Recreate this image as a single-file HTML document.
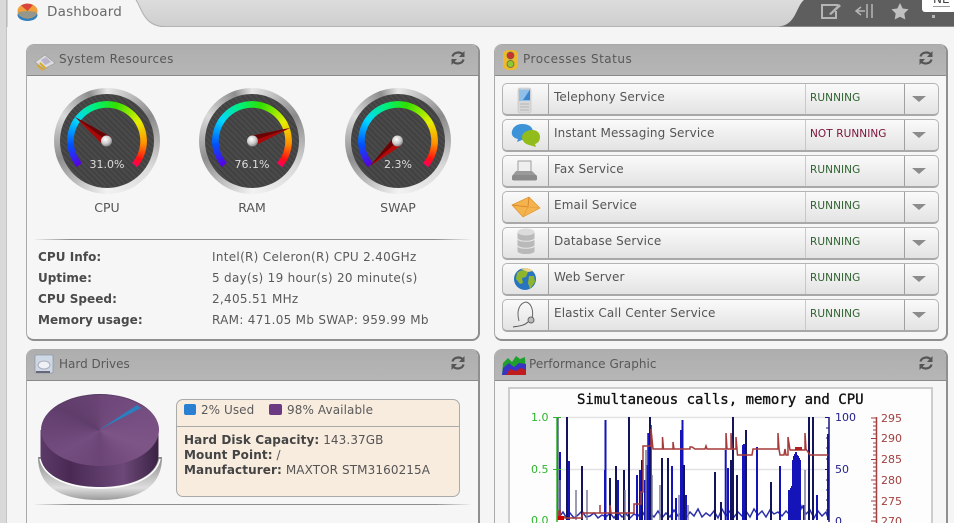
<!DOCTYPE html>
<html><head><meta charset="utf-8"><style>
html,body{margin:0;padding:0;width:954px;height:523px;overflow:hidden}
#w{position:absolute;left:0;top:0;width:954px;height:523px;overflow:hidden;background:#f5f5f5;font-family:"DejaVu Sans","Liberation Sans",sans-serif;font-size:12px;color:#555;filter:blur(.35px)}
div,span,svg{position:absolute;box-sizing:border-box;white-space:nowrap}
b,i{position:static}
.panel{background:#f6f6f6;border:1px solid #aaa;border-right:2px solid #8f8f8f;border-bottom:2px solid #8f8f8f;border-radius:8px;overflow:hidden}
.head{left:0;right:0;top:0;height:31px;background:linear-gradient(#aeaeae,#b6b6b6);border-bottom:1px solid #8a8a8a}
.t{font-size:12px;color:#585858;line-height:16px}
.row{left:502px;width:437px;height:33px;border:1px solid #b4b4b4;border-bottom:2px solid #a8a8a8;border-radius:5px;background:linear-gradient(#fafafa,#e3e3e3);overflow:hidden}
.c1{left:45px;top:0;bottom:0;width:1px;background:#a0a0a0}
.c2{left:302px;top:0;bottom:0;width:1px;background:#c8c8c8}
.c3{left:401px;top:0;bottom:0;width:1px;background:#a0a0a0}
.name{left:51px;top:5px;line-height:16px;color:#555;letter-spacing:.12px}
.st{left:307px;top:6px;font-size:10.500px;line-height:16px;color:#2f622f;letter-spacing:.08px}
.st.n{color:#7a1238}
.tri{left:409px;top:12px;width:0;height:0;border-left:7px solid transparent;border-right:7px solid transparent;border-top:6px solid #8c8c8c}
.lb{font-weight:bold;color:#4a4a4a;left:38px;line-height:16px;font-size:12px;letter-spacing:.05px}
.vl{left:212px;line-height:16px;color:#5a5a5a;font-size:12px;letter-spacing:.3px}
.gl{width:106px;text-align:center;font-size:12.500px;color:#555;line-height:14px;top:201px}
.gv{width:106px;text-align:center;font-size:11px;color:#ddd;line-height:14px;top:158px}
.rg{top:88px;width:106px;height:106px;border-radius:50%;background:conic-gradient(#e8e8e8,#8a8a8a 60deg,#d9d9d9 120deg,#f2f2f2 180deg,#8f8f8f 250deg,#dadada 300deg,#8e8e8e 340deg,#e8e8e8)}
.dk{top:94px;width:94px;height:94px;border-radius:50%;background:repeating-linear-gradient(45deg,#4a4a4a 0 2px,#414141 2px 4px)}
.ar{top:101px;width:80px;height:80px;border-radius:50%;background:conic-gradient(from 229deg,#5a00e0 0deg,#0050ff 35deg,#00d8ff 75deg,#00f070 115deg,#30e000 145deg,#e6f000 190deg,#ff9000 225deg,#ff1010 250deg,#ff0060 262deg,transparent 262deg);-webkit-mask:radial-gradient(circle,transparent 33px,#000 33.500px)}
</style></head><body><div id="w">

<!-- top bar -->
<div style="left:0;top:0;width:954px;height:27px;background:linear-gradient(#dcdcdc,#cfcfcf);border-bottom:1px solid #b5b5b5"></div>
<div style="left:0;top:0;width:7px;height:523px;background:#d9d9d9;border-right:1px solid #c4c4c4"></div>
<svg style="left:0;top:0" width="954" height="28">
<path d="M7 27V0H136C141 6 143 27 164 27Z" fill="#f5f5f5"/>
<path d="M7 27V0M136 0C141 6 143 26 164 26.500" fill="none" stroke="#b0b0b0"/>
<path d="M954 0H804C796 6 796 26 778 26.500H954Z" fill="#5e5e5e"/>
<!-- logo -->
<ellipse cx="27.500" cy="15" rx="10" ry="6" fill="#2f7fc1"/>
<ellipse cx="27.500" cy="11" rx="10" ry="7.500" fill="#f0a03a"/>
<path d="M27.500 11L21 5.500Q27 2 33 5Z" fill="#d9453a"/>
<path d="M27.500 11L37 12Q35 18 27 18Q20 18 18 12Z" fill="#4a90d0" opacity=".55"/>
<!-- top-right icons -->
<path d="M838 5H822V18H836V11" fill="none" stroke="#b5b5b5" stroke-width="2"/>
<path d="M829 14L839 4L841 6L831 15Z" fill="#b5b5b5"/>
<path d="M867 4V18M872 4V18" stroke="#b5b5b5" stroke-width="1.500"/>
<path d="M856 11H865M861 7L856 11L861 15" fill="none" stroke="#b5b5b5" stroke-width="1.500"/>
<path d="M900 3L902.700 8.500L908.500 9.300L904.300 13.500L905.300 19.500L900 16.700L894.700 19.500L895.700 13.500L891.500 9.300L897.300 8.500Z" fill="#c0c0c0"/>
<rect x="932" y="15" width="3" height="3" fill="#b5b5b5"/>
</svg>
<div style="left:47px;top:3px;font-size:13.500px;line-height:18px;color:#6a6a6a;letter-spacing:.2px">Dashboard</div>
<div style="left:922px;top:-4px;width:40px;height:16px;background:#fff;border-radius:3px;overflow:hidden"><span style="left:11px;top:-4px;font-size:12px;line-height:14px;color:#444;border-bottom:1px solid #999">NE</span></div>

<!-- System Resources -->
<div class="panel" style="left:26px;top:44px;width:454px;height:297px"><div class="head"></div></div>
<div class="t" style="left:59px;top:51px;letter-spacing:.3px">System Resources</div>
<svg style="left:33px;top:51px" width="24" height="20"><path d="M2 11L12 4L22 12L11 18Z" fill="#ddd" stroke="#999" stroke-width=".6"/><path d="M8 9L13 6L18 11L12 14Z" fill="#b9b4c9"/><path d="M4 14L10 19M7 12L13 18" stroke="#d9a92e" stroke-width="2"/></svg>
<svg style="left:449px;top:49px" width="18" height="18" viewBox="0 0 18 18"><path d="M3.500 7.500C4.500 3.500 10.500 2 14 5.500M14.500 10.500C13.500 14.500 7.500 16 4 12.500" fill="none" stroke="#555" stroke-width="2.200"/><path d="M15.500 2V8H10ZM2.500 16V10H8Z" fill="#555"/></svg>

<!-- gauges -->
<div class="rg" style="left:54px"></div><div class="dk" style="left:60px"></div><div class="ar" style="left:67px"></div>
<div class="rg" style="left:199px"></div><div class="dk" style="left:205px"></div><div class="ar" style="left:212px"></div>
<div class="rg" style="left:345px"></div><div class="dk" style="left:351px"></div><div class="ar" style="left:358px"></div>

<svg style="left:0;top:0" width="480" height="200">
<defs><radialGradient id="k" cx=".4" cy=".35" r=".7"><stop offset="0" stop-color="#fff"/><stop offset=".6" stop-color="#c8c8c8"/><stop offset="1" stop-color="#777"/></radialGradient></defs>
<path d="M75 117L111 137L103 145Z" fill="#a80808"/><path d="M75 117L111 137L107 141Z" fill="#6a0404"/>
<path d="M290 128L250 136L254 146Z" fill="#a80808"/><path d="M290 128L250 136L252 141Z" fill="#6a0404"/>
<path d="M370 166L394 137L402 145Z" fill="#b80808"/><path d="M370 166L394 137L398 141Z" fill="#6a0404"/>
<circle cx="106.500" cy="141" r="5.500" fill="url(#k)"/>
<circle cx="252.500" cy="141" r="5.500" fill="url(#k)"/>
<circle cx="397.500" cy="141" r="5.500" fill="url(#k)"/>
</svg>
<div class="gv" style="left:54px">31.0%</div>
<div class="gv" style="left:199px">76.1%</div>
<div class="gv" style="left:345px">2.3%</div>
<div class="gl" style="left:54px">CPU</div>
<div class="gl" style="left:199px">RAM</div>
<div class="gl" style="left:345px">SWAP</div>

<div style="left:35px;top:239px;width:435px;height:1px;background:linear-gradient(90deg,#eee,#8f8f8f 8%,#8f8f8f 92%,#eee)"></div>
<div class="lb" style="top:249px">CPU Info:</div><div class="vl" style="top:249px">Intel(R) Celeron(R) CPU 2.40GHz</div>
<div class="lb" style="top:270px">Uptime:</div><div class="vl" style="top:270px">5 day(s) 19 hour(s) 20 minute(s)</div>
<div class="lb" style="top:291px">CPU Speed:</div><div class="vl" style="top:291px">2,405.51 MHz</div>
<div class="lb" style="top:312px">Memory usage:</div><div class="vl" style="top:312px">RAM: 471.05 Mb SWAP: 959.99 Mb</div>

<!-- Processes Status -->
<div class="panel" style="left:494px;top:44px;width:454px;height:297px"><div class="head"></div></div>
<div class="t" style="left:523px;top:51px;letter-spacing:.5px">Processes Status</div>
<svg style="left:501px;top:49px" width="20" height="22"><rect x="2" y="1" width="15" height="20" rx="5" fill="#eeb92c"/><circle cx="9.500" cy="6.500" r="3.500" fill="#c93030" stroke="#665" stroke-width=".8"/><circle cx="9.500" cy="15" r="3.500" fill="#8dc832" stroke="#665" stroke-width=".8"/></svg>
<svg style="left:917px;top:49px" width="18" height="18" viewBox="0 0 18 18"><path d="M3.500 7.500C4.500 3.500 10.500 2 14 5.500M14.500 10.500C13.500 14.500 7.500 16 4 12.500" fill="none" stroke="#555" stroke-width="2.200"/><path d="M15.500 2V8H10ZM2.500 16V10H8Z" fill="#555"/></svg>

<div class="row" style="top:83px"><div class="c1"></div><div class="c2"></div><div class="c3"></div><div class="name">Telephony Service</div><div class="st">RUNNING</div><div class="tri"></div></div>
<div class="row" style="top:119px"><div class="c1"></div><div class="c2"></div><div class="c3"></div><div class="name">Instant Messaging Service</div><div class="st n">NOT RUNNING</div><div class="tri"></div></div>
<div class="row" style="top:155px"><div class="c1"></div><div class="c2"></div><div class="c3"></div><div class="name">Fax Service</div><div class="st">RUNNING</div><div class="tri"></div></div>
<div class="row" style="top:191px"><div class="c1"></div><div class="c2"></div><div class="c3"></div><div class="name">Email Service</div><div class="st">RUNNING</div><div class="tri"></div></div>
<div class="row" style="top:227px"><div class="c1"></div><div class="c2"></div><div class="c3"></div><div class="name">Database Service</div><div class="st">RUNNING</div><div class="tri"></div></div>
<div class="row" style="top:263px"><div class="c1"></div><div class="c2"></div><div class="c3"></div><div class="name">Web Server</div><div class="st">RUNNING</div><div class="tri"></div></div>
<div class="row" style="top:299px"><div class="c1"></div><div class="c2"></div><div class="c3"></div><div class="name">Elastix Call Center Service</div><div class="st">RUNNING</div><div class="tri"></div></div>

<svg style="left:502px;top:83px" width="46" height="250">
<!-- phone -->
<rect x="16" y="5" width="13" height="25" rx="2" fill="#d8d8d8" stroke="#c0c0c0" stroke-width=".6"/>
<path d="M17 6.500H28V18H17Z" fill="#8fc0ea"/><path d="M28 6.500V17L21 17Z" fill="#3d86cf"/>
<path d="M18 21H27M18 24H27M18 27H27" stroke="#b5b5b5" stroke-width="1"/>
<!-- chat -->
<path d="M20 41C28 41 31 45 31 49L25 55L15 59L16 56C11 55 9 52 10 48C11 44 15 41 20 41Z" fill="#3c93d8"/>
<path d="M30 47C35 47 38 50 38 54C38 58 36 60 33 61L34 64L27 62C23 61 20 58 20 54C20 50 25 47 30 47Z" fill="#92bb1c"/>
<!-- fax -->
<rect x="16" y="78" width="13" height="12" fill="#efefef" stroke="#888" stroke-width=".8"/>
<path d="M10 93L14 88H30L35 93V97H10Z" fill="#9a9a9a"/><rect x="10" y="92" width="25" height="5.500" rx="2" fill="#8a8a8a"/>
<!-- email -->
<path d="M10 122L27 114L38 125L21 134Z" fill="#f4b34d" stroke="#de922f" stroke-width=".7"/>
<path d="M10 122L26 124L27 114" fill="none" stroke="#d98a2b"/><path d="M21 134L26 124L38 125" fill="none" stroke="#e9a341"/>
<!-- database -->
<path d="M15.500 149V168C15.500 172 32.500 172 32.500 168V149Z" fill="#b9b9b9"/><ellipse cx="24" cy="149" rx="8.500" ry="3.500" fill="#dcdcdc"/><path d="M15.500 156C18 159 30 159 32.500 156M15.500 163C18 166 30 166 32.500 163" fill="none" stroke="#e6e6e6"/>
<!-- globe -->
<g transform="translate(-1 3)">
<circle cx="24" cy="193" r="11" fill="#2874c0"/>
<path d="M16 187C20 183 24 184 27 186L25 191L21 192L22 197L19 198L15 193ZM28 190L33 190L34 196L29 203L27 197Z" fill="#8fb52f"/>
<path d="M20 183C24 181 29 182 32 185L27 186Z" fill="#e8d48a"/>
</g>
<!-- headset -->
<path d="M17 238C14 227 18 220 24 219C29 220 32 227 30 236" fill="none" stroke="#666" stroke-width="1"/>
<circle cx="29" cy="237" r="3" fill="#bbb" stroke="#666"/>
<path d="M26 239C22 243 16 243 11 244" fill="none" stroke="#555" stroke-width="1"/>
</svg>

<!-- Hard Drives -->
<div class="panel" style="left:26px;top:349px;width:454px;height:190px"><div class="head"></div></div>
<div class="t" style="left:59px;top:356px">Hard Drives</div>
<svg style="left:33px;top:353px" width="22" height="22"><rect x="2" y="2" width="18" height="18" rx="1" fill="#cfd9e6" stroke="#8d9aa8" stroke-width=".8"/><ellipse cx="11" cy="12" rx="6" ry="4" fill="#eef1f5" stroke="#aab"/><rect x="3" y="18" width="14" height="2" fill="#667"/></svg>
<svg style="left:449px;top:354px" width="18" height="18" viewBox="0 0 18 18"><path d="M3.500 7.500C4.500 3.500 10.500 2 14 5.500M14.500 10.500C13.500 14.500 7.500 16 4 12.500" fill="none" stroke="#555" stroke-width="2.200"/><path d="M15.500 2V8H10ZM2.500 16V10H8Z" fill="#555"/></svg>

<svg style="left:30px;top:385px" width="140" height="120">
<defs>
<linearGradient id="g1" x1="0" x2="0" y1="0" y2="1"><stop offset="0" stop-color="#8a8a8a"/><stop offset=".72" stop-color="#dedede"/><stop offset="1" stop-color="#9a9a9a"/></linearGradient>
<linearGradient id="g2" x1="0" x2="1" y1="0" y2="0"><stop offset="0" stop-color="#5c3a68"/><stop offset=".25" stop-color="#4a2a55"/><stop offset=".7" stop-color="#6c4878"/><stop offset="1" stop-color="#3a2244"/></linearGradient>
</defs>
<path d="M8 72Q8 115 70 115Q132 115 132 72Z" fill="url(#g1)"/>
<path d="M10.500 45V70C10.500 90 37 102 70 102C103 102 128.500 90 128.500 70V45Z" fill="url(#g2)"/>
<path d="M10 74C14 92 37 103 70 103C103 103 126 92 130 74" fill="none" stroke="#fff" stroke-width="1.500"/>
</svg>
<div style="left:40.500px;top:394px;width:118px;height:72px;border-radius:50%;background:conic-gradient(from 0deg,#6d4678,#744c80 60deg,#7d5586 110deg,#6b4575 180deg,#744d80 240deg,#5f3d6b 300deg,#6a4474 360deg);border-top:1px solid #55395e"></div>
<svg style="left:30px;top:385px" width="140" height="120"><path d="M69 45L107 20L111 23Z" fill="#2a7fc0"/></svg>

<div style="left:176px;top:399px;width:284px;height:98px;background:#f8ecdf;border:1px solid #aaa;border-radius:7px"></div>
<div style="left:177px;top:426px;width:282px;height:1px;background:#aaa"></div>
<div style="left:184px;top:404px;width:12px;height:11px;background:#2c80d2;border-radius:2px"></div>
<div class="vl" style="left:201px;top:402px;letter-spacing:.05px">2% Used</div>
<div style="left:269px;top:404px;width:13px;height:11px;background:#6b3a82;border-radius:2px"></div>
<div class="vl" style="left:287px;top:402px;letter-spacing:.1px">98% Available</div>
<div style="left:184px;top:433px;line-height:15px;color:#555;font-size:12px;letter-spacing:.1px"><b style="color:#444">Hard Disk Capacity:</b> 143.37GB<br><b style="color:#444">Mount Point:</b> /<br><b style="color:#444">Manufacturer:</b> MAXTOR STM3160215A</div>
<div style="left:35px;top:504px;width:435px;height:1px;background:linear-gradient(90deg,#eee,#8f8f8f 8%,#8f8f8f 92%,#eee)"></div>

<!-- Performance -->
<div class="panel" style="left:494px;top:349px;width:454px;height:190px"><div class="head"></div></div>
<div class="t" style="left:529px;top:356px;letter-spacing:.05px">Performance Graphic</div>
<svg style="left:501px;top:354px" width="26" height="22"><path d="M1 21L2 9L7 4L11 8L15 2L19 5L24 3L25 21Z" fill="#1fa02c"/><path d="M1 21L2 14L8 9L13 13L18 9L25 10V21Z" fill="#3a34c4"/><path d="M5 21L9 15L15 17L20 14L25 16V21Z" fill="#c01c1c"/></svg>
<svg style="left:917px;top:354px" width="18" height="18" viewBox="0 0 18 18"><path d="M3.500 7.500C4.500 3.500 10.500 2 14 5.500M14.500 10.500C13.500 14.500 7.500 16 4 12.500" fill="none" stroke="#555" stroke-width="2.200"/><path d="M15.500 2V8H10ZM2.500 16V10H8Z" fill="#555"/></svg>

<div style="left:508px;top:387px;width:425px;height:140px;background:#fdfdfd;border:2px solid #cdcdcd"></div>
<div style="left:577px;top:392px;font-family:'DejaVu Sans Mono','Liberation Mono',monospace;font-size:14px;line-height:17px;color:#111;-webkit-text-stroke:.35px #111">Simultaneous calls, memory and CPU</div>
<svg style="left:0;top:0" width="954" height="523">
<rect x="557" y="417" width="272" height="106" fill="#fff"/>
<path d="M557 417.500H829M557 469.500H829" stroke="#e2e2e2" stroke-width="1.500"/>
<!-- baseline noise -->
<path d="M560 516L563 512L566 517L570 513L574 518L578 515L582 511L586 517L590 516L594 513L598 518L602 515L606 517L610 513L614 518L618 512L622 517L626 514L630 518L634 514L638 516L642 511L646 518L650 513L654 517L658 511L662 518L666 513L670 517L674 510L678 516L682 512L686 518L690 512L694 516L698 509L702 517L706 513L710 516L714 511L718 518L722 509L726 516L730 511L734 517L738 512L742 516L746 511L750 517L754 509L758 515L762 511L766 517L770 510L774 514L778 512L782 516L786 511L790 515L794 511L798 517L802 506L806 514L810 510L814 518L818 511L822 516L826 512L828 518" fill="none" stroke="#2a2fa8" stroke-width="1.500"/>
<!-- blue spikes -->
<path d="M560 520V452M569 520V461M605 520V470M618 520V480M605.500 520V420M637 520V475M645 520V480M640 470V520M672 520V466M676 520V498M647 520V465M650 520V494M681 520V445M681 519V430M682.500 520V420M686 520V495M725.700 520V450M728 520V468M743 520V445M744 520V444M745 520V444M746 520V444M757 520V447M780 520V466M789 520V490M790 520V490M791 520V488M792 520V486M793 520V460M794 520V456M795 520V454M796 520V452M797 520V455M798 520V456M799 520V458M800 520V460M804 520V505M817 520V495M828 520V434" stroke="#1414b8" stroke-width="2" fill="none"/>
<path d="M648 520V433M649.500 520V433M651 520V425" stroke="#1414c8" stroke-width="1.500"/>
<!-- navy spikes -->
<path d="M557.500 520V417M567 520V417M582 520V466M629 520V417M610 520V478M616 520V466M624 520V470M642 520V460M650 520V417M662 520V458M668 520V458M684 520V465M733 520V417M731 520V460M737 520V475M746 520V430M771 520V482M809 520V417M813 520V417M715 520V472M721 520V502" stroke="#14145a" stroke-width="2" fill="none"/>
<path d="M560 520V480M576 520V490M587 520V490M625 520V490M646 520V450M652 520V475M660 520V485M679 520V495M688 520V505M805 520V470" stroke="#7a7a9a" stroke-width="1.500" fill="none"/>
<!-- red line -->
<path d="M558 517H565V518H582V516L583 513H600L600 505V513H610V505L611 513H634V504H641V492H643V446H651V429L653 449H662.500V437L663.500 449H673V442L674 449H690V447H692L695 449H705L706 446L707 449H726V433L727 449H731V433L732 449H736V437L737.500 455H752L753 449H778V433L779 449L780 455H784L785 449L786 455H788V437L790 450H805V433L806 449L810 455H829" fill="none" stroke="#a63a3a" stroke-width="1.500"/>
<path d="M795 450h7v-3h-7z" fill="#b02020"/>
<path d="M557 510h4v10h-4z" fill="#b02020" opacity=".7"/>
<path d="M558 516h6v4h-6z" fill="#c00"/>
<!-- axes -->
<path d="M557 417V522" stroke="#2cb52c" stroke-width="1.500"/>
<path d="M553 417.500H561M553 469.500H561M557 428H559M557 438H559M557 448H559M557 459H559M557 480H559M557 490H559M557 500H559M557 510H559" stroke="#2cb52c" stroke-width="1"/>
<path d="M829 417V522" stroke="#16167e" stroke-width="1.500"/>
<path d="M825 417.500H829M825 469.500H829M826 428H829M826 438H829M826 448H829M826 459H829M826 480H829M826 490H829M826 500H829M826 510H829" stroke="#16167e" stroke-width="1"/>
<path d="M876.500 417V523" stroke="#a04040" stroke-width="1.500"/>
<path d="M871 418H876M871 438.500H876M871 459.500H876M871 480H876M871 501H876M871 521H876M873 422H876M873 426H876M873 430H876M873 434H876M873 443H876M873 447H876M873 451H876M873 455H876M873 463H876M873 467H876M873 471H876M873 476H876M873 484H876M873 488H876M873 492H876M873 497H876M873 505H876M873 509H876M873 513H876M873 517H876" stroke="#a04040" stroke-width="1"/>
<g font-family="DejaVu Sans, Liberation Sans, sans-serif" font-size="11">
<text x="531" y="421" fill="#2cb52c">1.0</text>
<text x="531" y="473" fill="#2cb52c">0.5</text>
<text x="531" y="524" fill="#2cb52c">0.0</text>
<text x="835" y="421" fill="#22228a">100</text>
<text x="835" y="473" fill="#22228a">50</text>
<text x="835" y="525" fill="#22228a">0</text>
<text x="881" y="422" fill="#a04040">295</text>
<text x="881" y="442" fill="#a04040">290</text>
<text x="881" y="463" fill="#a04040">285</text>
<text x="881" y="484" fill="#a04040">280</text>
<text x="881" y="505" fill="#a04040">275</text>
<text x="881" y="525" fill="#a04040">270</text>
</g>
</svg>
</div></body></html>
